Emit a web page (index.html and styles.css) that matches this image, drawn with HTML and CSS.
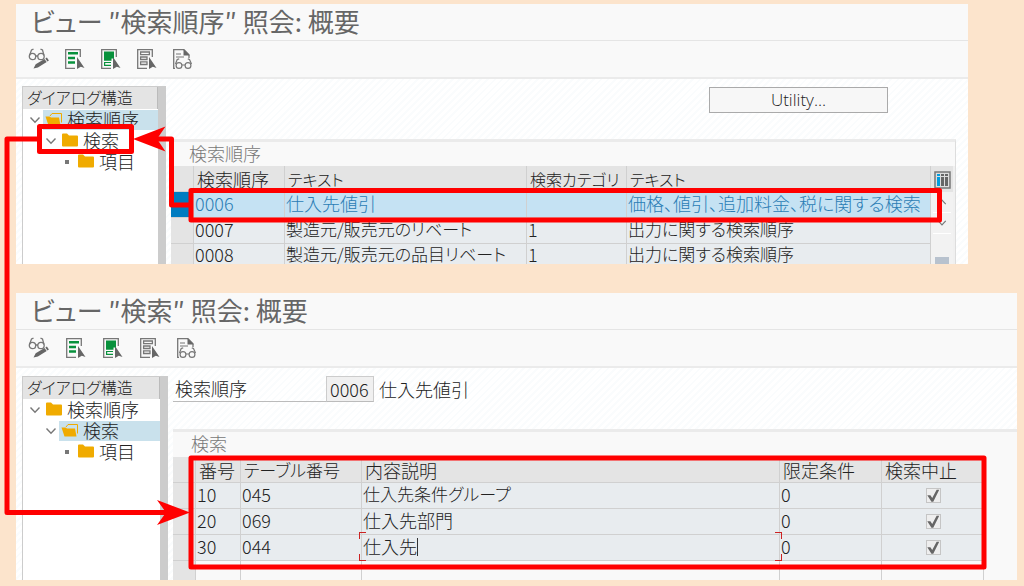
FILE: index.html
```html
<!DOCTYPE html>
<html lang="ja">
<head>
<meta charset="utf-8">
<title>検索順序 照会</title>
<link rel="stylesheet" href="styles.css">
</head>
<body>
<svg class="defs" aria-hidden="true">
  <symbol id="i-edit" viewBox="0 0 22 22">
    <g fill="none" stroke="#777" stroke-width="1.3">
      <circle cx="4.5" cy="8.5" r="3.2"/><circle cx="13" cy="8.5" r="3.2"/>
      <path d="M7.5 8h2.500M1.500 7.500L3.500 2l2-.8M16 7.500L14.500 2l-2-.8"/>
    </g>
    <path d="M5.500 20.500l2.200-4.200 8.800-5.300 2.200 3-8.800 5.500zM17.300 10.400l1.600-1 2 3-1.500 1z" fill="#666"/>
  </symbol>
  <symbol id="i-page" viewBox="0 0 22 22">
    <path d="M11 20.300H1.700V1.700h14.600V9" fill="none" stroke="#777" stroke-width="1.300"/>
    <path d="M13 9l7.500 11-3.700-1.300L13 21z" fill="#666"/>
  </symbol>
  <symbol id="i-selall" viewBox="0 0 22 22">
    <use href="#i-page"/>
    <path d="M4 4h10v2.600H4zM4 8.800h7v2.400H4zM4 13.300h7v2.400H4z" fill="#08913c"/>
  </symbol>
  <symbol id="i-block" viewBox="0 0 22 22">
    <use href="#i-page"/>
    <path d="M4 3.500h10v7h-2.500v2.200H4z" fill="#08913c"/>
    <path d="M11 14.500H4.600v2.800H11" fill="none" stroke="#08913c" stroke-width="1.200"/>
  </symbol>
  <symbol id="i-desel" viewBox="0 0 22 22">
    <use href="#i-page"/>
    <path d="M4.600 4h8.800v2.700H4.600zM4.600 9h6.400v2.500H4.600zM4.600 13.800h6.400v2.700H4.600z" fill="none" stroke="#777" stroke-width="1.300"/>
  </symbol>
  <symbol id="i-detail" viewBox="0 0 22 22">
    <path d="M3 20.300H1.700V1.700H12l5 5V10" fill="none" stroke="#777" stroke-width="1.300"/>
    <path d="M11.500 1.200v6.300h6.300z" fill="#666"/>
    <g fill="none" stroke="#777" stroke-width="1.200">
      <path d="M4 6h5M4 9h8M3.500 16l1.700-4.500 2-.6M19.500 16l-2-4.500-1.700-.6M10 17h3"/>
      <circle cx="7" cy="17.500" r="2.900"/><circle cx="16" cy="17.500" r="2.900"/>
    </g>
  </symbol>
  <symbol id="i-folder" viewBox="0 0 18 14">
    <path d="M1 1.500q0-1 1-1h4l2 2h8q1 0 1 1V12.500q0 1-1 1H2q-1 0-1-1z" fill="#f0ab00"/>
  </symbol>
  <symbol id="i-open" viewBox="0 0 18 14">
    <path d="M5 4l2-2.500h9.500v9" fill="none" stroke="#f0ab00"/>
    <path d="M.5 4.500h4l1.500 1h8l1.500 8H3.500z" fill="#f0ab00"/>
  </symbol>
  <symbol id="i-down" viewBox="0 0 12 12">
    <path d="M1.500 3.500L6 8.200l4.500-4.700" fill="none" stroke="#777" stroke-width="1.400"/>
  </symbol>
</svg>

<main class="page">
  <section class="window window-top">
    <h1 class="title">ビュー ″検索順序″ 照会: 概要</h1>
    <div class="toolbar">
      <button aria-label="変更"><svg><use href="#i-edit"/></svg></button>
      <button aria-label="全選択"><svg><use href="#i-selall"/></svg></button>
      <button aria-label="ブロック選択"><svg><use href="#i-block"/></svg></button>
      <button aria-label="全選択解除"><svg><use href="#i-desel"/></svg></button>
      <button aria-label="詳細"><svg><use href="#i-detail"/></svg></button>
    </div>
    <div class="workspace">
      <nav class="tree">
        <h2 class="tree-head">ダイアログ構造</h2>
        <div class="node"><button class="twisty" aria-label="閉じる"><svg><use href="#i-down"/></svg></button><button class="item selected"><svg><use href="#i-open"/></svg>検索順序</button></div>
        <div class="node level2"><button class="twisty" aria-label="閉じる"><svg><use href="#i-down"/></svg></button><button class="item"><svg><use href="#i-folder"/></svg>検索</button></div>
        <div class="node level3"><span class="dot"></span><button class="item"><svg><use href="#i-folder"/></svg>項目</button></div>
      </nav>
      <div class="content">
        <div class="actions"><button class="utility">Utility...</button></div>
        <section class="group group-top">
          <h2 class="group-title">検索順序</h2>
          <div class="viewport">
            <table>
              <colgroup><col class="c-sel"><col class="c-seq"><col class="c-name"><col class="c-cat"><col></colgroup>
              <thead><tr><th></th><th>検索順序</th><th class="kana">テキスト</th><th class="kana">検索カテゴリ</th><th class="kana">テキスト</th></tr></thead>
              <tbody>
                <tr class="current"><td></td><td>0006</td><td>仕入先値引</td><td></td><td>価格、値引、追加料金、税に関する検索</td></tr>
                <tr><td></td><td>0007</td><td class="mixed">製造元/販売元のリベート</td><td>1</td><td class="mixed">出力に関する検索順序</td></tr>
                <tr class="last"><td></td><td>0008</td><td class="mixed">製造元/販売元の品目リベート</td><td>1</td><td class="mixed">出力に関する検索順序</td></tr>
              </tbody>
            </table>
            <div class="scroll">
              <button class="config" aria-label="設定"><svg viewBox="0 0 17 18"><path d="M1 1h15v16H1z" fill="#ddd" stroke="#777" stroke-width="1.500"/><path d="M3 3h3v2H3zM3 6h3v9H3z" fill="#009de0"/><path d="M7 3h3v2H7zM7 6h3v9H7zM11 3h3v2h-3zM11 6h3v9h-3z" fill="#666"/></svg></button>
              <button class="step up" aria-label="上へ"><svg><use href="#i-down"/></svg></button>
              <button class="step" aria-label="下へ"><svg><use href="#i-down"/></svg></button>
              <div class="track"><span class="thumb"></span></div>
            </div>
          </div>
        </section>
      </div>
    </div>
  </section>

  <section class="window window-bottom">
    <h1 class="title">ビュー ″検索″ 照会: 概要</h1>
    <div class="toolbar">
      <button aria-label="変更"><svg><use href="#i-edit"/></svg></button>
      <button aria-label="全選択"><svg><use href="#i-selall"/></svg></button>
      <button aria-label="ブロック選択"><svg><use href="#i-block"/></svg></button>
      <button aria-label="全選択解除"><svg><use href="#i-desel"/></svg></button>
      <button aria-label="詳細"><svg><use href="#i-detail"/></svg></button>
    </div>
    <div class="workspace">
      <nav class="tree">
        <h2 class="tree-head">ダイアログ構造</h2>
        <div class="node"><button class="twisty" aria-label="閉じる"><svg><use href="#i-down"/></svg></button><button class="item"><svg><use href="#i-folder"/></svg>検索順序</button></div>
        <div class="node level2"><button class="twisty" aria-label="閉じる"><svg><use href="#i-down"/></svg></button><button class="item selected"><svg><use href="#i-open"/></svg>検索</button></div>
        <div class="node level3"><span class="dot"></span><button class="item"><svg><use href="#i-folder"/></svg>項目</button></div>
      </nav>
      <div class="content">
        <div class="field">
          <label for="seq">検索順序</label>
          <input id="seq" value="0006" readonly>
          <span class="field-text">仕入先値引</span>
        </div>
        <section class="group group-bottom">
          <h2 class="group-title">検索</h2>
          <table>
            <colgroup><col class="c-sel"><col class="c-no"><col class="c-table"><col><col class="c-cond"><col class="c-cond"></colgroup>
            <thead><tr><th></th><th>番号</th><th class="mixed">テーブル番号</th><th>内容説明</th><th>限定条件</th><th>検索中止</th></tr></thead>
            <tbody>
              <tr><td></td><td>10</td><td>045</td><td class="mixed">仕入先条件グループ</td><td>0</td><td class="check"><input type="checkbox" aria-label="検索中止 10" checked disabled></td></tr>
              <tr><td></td><td>20</td><td>069</td><td>仕入先部門</td><td>0</td><td class="check"><input type="checkbox" aria-label="検索中止 20" checked disabled></td></tr>
              <tr><td></td><td>30</td><td>044</td><td class="focus">仕入先<span class="caret"></span></td><td>0</td><td class="check"><input type="checkbox" aria-label="検索中止 30" checked disabled></td></tr>
              <tr class="blank"><td></td><td></td><td></td><td></td><td></td><td></td></tr>
            </tbody>
          </table>
        </section>
      </div>
    </div>
  </section>

  <svg class="callouts" width="1024" height="586" viewBox="0 0 1024 586" aria-hidden="true">
    <g fill="none" stroke="#f00" stroke-width="5" stroke-linejoin="round">
      <path d="M39.500 126.500h92v25h-92z"/>
      <path d="M191 190.500h748.500v29.500H191z"/>
      <path d="M191 458h793v109H191z"/>
      <path d="M190 205h-18.500v-66H150"/>
      <path d="M40 139H7v373.500h165"/>
    </g>
    <path d="M133 139l32.500-12.500L157 139l8.500 12.500z" fill="#f00"/>
    <path d="M190 512.500l-33-12.500 9 12.500-9 12.500z" fill="#f00"/>
  </svg>
</main>
</body>
</html>
```
FILE: styles.css
```css
* { box-sizing: border-box; }

body {
  margin: 0;
  background: #fce4cc;
  color: #222;
  font-family: "Noto Sans CJK JP", sans-serif;
  font-size: 18px;
  font-weight: 300;
  font-feature-settings: "palt";
}

button {
  margin: 0;
  padding: 0;
  border: 0;
  background: none;
  color: inherit;
  font: inherit;
  font-feature-settings: inherit;
}

h1, h2 { margin: 0; font-weight: 300; }

.defs { position: absolute; width: 0; height: 0; }

.page {
  position: relative;
  display: flex;
  flex-direction: column;
  gap: 29px;
  padding: 4px 7px 5px 16px;
}

.window { background: #fff; overflow: hidden; }
.window-top { margin-right: 49px; }

.title {
  padding: 0 0 3px 15px;
  border-bottom: 1px solid #e5e5e5;
  background: #f9f9f9;
  color: #666;
  font-size: 26px;
  font-weight: 400;
  line-height: 33px;
}

.toolbar {
  display: flex;
  align-items: center;
  gap: 14px;
  height: 38px;
  padding-left: 12px;
  border-bottom: 2px solid #ebebeb;
  background: #f9f9f9;
}
.window-bottom .toolbar { gap: 15px; }
.toolbar button, .toolbar svg { display: block; width: 22px; height: 22px; }

.workspace {
  display: flex;
  padding: 7px 0 0 6px;
  background: repeating-linear-gradient(135deg, #fff 0 3px, #fafcfd 3px 5px);
}
.window-bottom .workspace { padding-top: 8px; }

.tree {
  flex: none;
  width: 144px;
  border: solid #ccc;
  border-width: 1px 8px 0 1px;
  background: #fff;
}
.window-bottom .tree { width: 146px; }

.tree-head {
  padding: 0 0 1px 4px;
  border-right: 1px solid #bbb;
  background: #e4e4e4;
  font-size: 16px;
  line-height: 21px;
  white-space: nowrap;
}

.node { display: flex; align-items: center; height: 21px; padding-left: 6px; }
.level2 { padding-left: 22px; }
.level3 { padding-left: 42px; }
.twisty { flex: none; width: 14px; height: 12px; }
.twisty svg { display: block; width: 12px; height: 12px; }
.dot { flex: none; width: 4px; height: 4px; margin-right: 6px; background: #777; }

.item {
  display: flex;
  flex: 1;
  align-items: center;
  gap: 4px;
  height: 20px;
  padding: 0 0 1px 2px;
  line-height: 18px;
  white-space: nowrap;
}
.item svg { flex: none; width: 18px; height: 14px; }
.selected { background: #c9e1ec; }

.content { flex: 1; min-width: 0; }

.actions { display: flex; justify-content: flex-end; padding: 1px 80px 0 0; }
.utility {
  width: 179px;
  height: 26px;
  border: 1px solid #aaa;
  background: #f7f7f7;
  font-family: "Open Sans", "Noto Sans", sans-serif;
  font-size: 17px;
  line-height: 24px;
}

.group { border-top: 3px solid #ebebeb; background: #f9f9f9; }
.group-top { margin: 26px 12px 0 5px; border-right: 1px solid #ddd; }
.group-bottom { margin: 27px 0 0 5px; padding-right: 33px; }
.group-title {
  padding: 0 0 2px 18px;
  color: #777;
  font-size: 18px;
  line-height: 22px;
}
.group-bottom .group-title { padding-bottom: 3px; }

.viewport { display: flex; overflow: hidden; padding-right: 2px; background: #f0f0f0; }

table { flex: 1; width: 100%; table-layout: fixed; border-collapse: separate; border-spacing: 0; }
.c-sel { width: 23px; }
.c-seq { width: 91px; }
.c-name { width: 242px; }
.c-cat { width: 100px; }
.c-no { width: 45px; }
.c-table { width: 121px; }
.c-cond { width: 102px; }

th, td {
  height: 26px;
  padding: 0 0 0 1px;
  border-right: 1px solid #d0d0d0;
  border-bottom: 1px solid #d0d0d0;
  background: #e8ecef;
  font-weight: 300;
  line-height: 22px;
  text-align: left;
  vertical-align: top;
  white-space: nowrap;
}
th { padding-left: 3px; background: #e4e4e4; vertical-align: middle; }
td:first-child { background: #e4e4e4; }
.kana { font-size: 16px; }
.mixed { font-size: 17px; }
.current td { background: #c5e2f3; color: #2a7db5; }
.current td:first-child { background: #007cc0; }
.last td { height: 20px; border-bottom: 0; line-height: 20px; }
.blank td { height: 19px; border-bottom: 0; background: #f9f9f9; }
.blank td:first-child { background: #e4e4e4; }

.scroll { display: flex; flex: none; flex-direction: column; align-items: center; width: 22px; background: #f2f2f2; }
.config { width: 100%; height: 26px; flex: none; background: #e4e4e4; }
.config svg { display: block; width: 17px; height: 18px; margin: 2px auto 0; }
.step { flex: none; width: 18px; height: 21px; border-bottom: 1px solid #fff; }
.step svg { display: block; width: 10px; height: 10px; margin: auto; }
.up svg { transform: rotate(180deg); }
.track { display: flex; flex: none; align-items: flex-end; width: 14px; height: 30px; }
.thumb { width: 14px; height: 7px; background: #b8c2ce; }

.field { display: flex; align-items: center; height: 26px; }
.field label {
  width: 153px;
  margin-left: 5px;
  padding-left: 2px;
  border-bottom: 1px solid #bbb;
  line-height: 25px;
}
.field input {
  width: 48px;
  height: 26px;
  padding: 0 3px;
  border: 1px solid #ccc;
  border-bottom-color: #bbb;
  border-radius: 0;
  background: #f0f0f0;
  color: inherit;
  font: inherit;
}
.field-text { margin-left: 5px; }

.check { text-align: center; vertical-align: middle; }
.check input {
  appearance: none;
  display: block;
  width: 15px;
  height: 15px;
  margin: 0 auto;
  border: 1px solid #c5c5c5;
  background: #eee;
}
.check input::before {
  content: "";
  display: block;
  width: 13px;
  height: 13px;
  background: #666;
  clip-path: polygon(6% 48%, 30% 48%, 44% 70%, 78% 6%, 98% 6%, 52% 98%, 38% 98%);
}

.focus { position: relative; }
.focus::before, .focus::after {
  content: "";
  position: absolute;
  top: -3px;
  bottom: -1px;
  width: 7px;
  background:
    linear-gradient(#c22, #c22) top / 7px 1px no-repeat,
    linear-gradient(#c22, #c22) bottom / 7px 1px no-repeat,
    linear-gradient(#c22, #c22) top left / 1px 7px no-repeat,
    linear-gradient(#c22, #c22) bottom left / 1px 7px no-repeat;
}
.focus::before { left: -3px; }
.focus::after { right: -3px; transform: scaleX(-1); }
.caret { display: inline-block; width: 1px; height: 18px; background: #333; vertical-align: text-bottom; margin-bottom: 3px; }

.callouts { position: absolute; top: 0; left: 0; pointer-events: none; }
```
